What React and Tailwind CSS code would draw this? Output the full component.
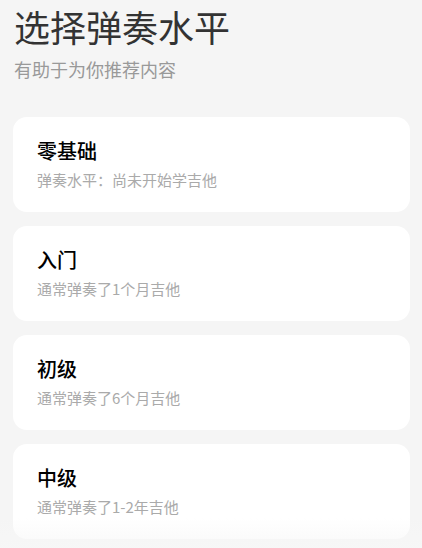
import React from 'react';

const levels = [
  { title: '零基础', desc: '弹奏水平：尚未开始学吉他' },
  { title: '入门', desc: '通常弹奏了1个月吉他' },
  { title: '初级', desc: '通常弹奏了6个月吉他' },
  { title: '中级', desc: '通常弹奏了1-2年吉他' },
];

export default function App() {
  return (
    <div
      className="relative h-[548px] w-[422px] overflow-hidden bg-[#f5f5f5]"
      style={{ fontFamily: '"Noto Sans CJK SC", "Noto Sans", sans-serif' }}
    >
      <div className="px-[14px] pt-[4px]">
        <h1 className="text-[36px] leading-[44px] font-normal text-[#333]">选择弹奏水平</h1>
        <p className="mt-[9px] text-[18px] leading-[24px] text-[#999]">有助于为你推荐内容</p>
      </div>

      <div className="mt-[36px] flex flex-col gap-[14px] pl-[13px] pr-[12px]">
        {levels.map((l) => (
          <div key={l.title} className="rounded-[14px] bg-white pl-[24px] pt-[20px] pb-[22px]">
            <p className="text-[20px] leading-[28px] font-medium text-black">{l.title}</p>
            <p className="mt-[5px] text-[15px] leading-[20px] text-[#aaa]">{l.desc}</p>
          </div>
        ))}
      </div>

      <div className="pointer-events-none absolute bottom-0 left-0 h-[30px] w-full bg-gradient-to-b from-transparent to-[#f7f7f7]/80" />
    </div>
  );
}
